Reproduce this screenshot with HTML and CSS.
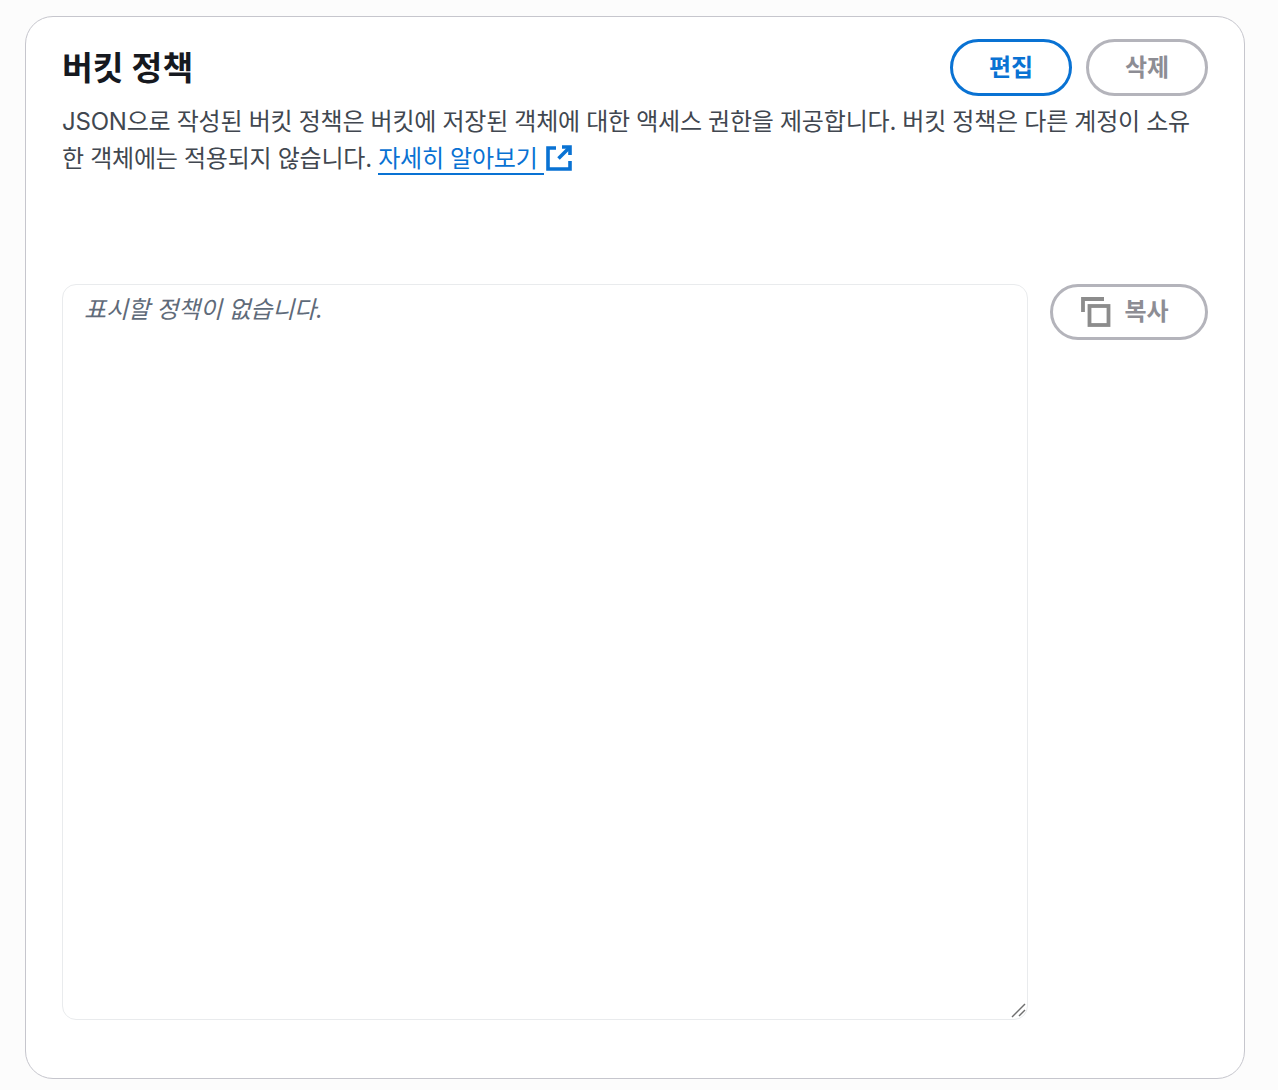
FILE: index.html
```html
<!DOCTYPE html>
<html lang="ko">
<head>
    <meta charset="UTF-8">
    <title>버킷 정책</title>
    <link rel="stylesheet" href="styles.css">
</head>
<body>
    <section class="card">
        <div class="card-header">
            <h2>버킷 정책</h2>
            <div class="actions">
                <button class="btn btn-primary"><span class="btn-label">편집</span></button>
                <button class="btn btn-disabled"><span class="btn-label">삭제</span></button>
            </div>
        </div>
        <p class="desc">JSON으로 작성된 버킷 정책은 버킷에 저장된 객체에 대한 액세스 권한을 제공합니다. 버킷 정책은 다른 계정이 소유한 객체에는 적용되지 않습니다. <a href="#" class="ext-link"><span class="ext-text">자세히 알아보기 </span><svg class="ext-icon" viewBox="0 0 26 26" width="26" height="26" fill="none" stroke="#0972d3" stroke-width="3.6"><path d="M10 3H2v21h22V16"/><path d="M16 2h8v8"/><path d="M23.5 2.5 12.5 13.5"/></svg></a></p>
        <div class="policy-row">
            <div class="policy-box">
                <textarea class="policy-text" placeholder="표시할 정책이 없습니다."></textarea>
                <svg class="grip" viewBox="0 0 16 16" width="16" height="16" stroke="#6f6f6f" stroke-width="1.5"><path d="M1 14 14 1"/><path d="M8 13 14 7"/></svg>
            </div>
            <button class="btn btn-disabled btn-copy">
                <svg viewBox="0 0 30 30" width="30" height="30" fill="none" stroke="#8c8c8c" stroke-width="3.8"><path d="M2 15V2h21"/><rect x="8.5" y="9" width="19" height="19"/></svg>
                <span class="btn-label">복사</span>
            </button>
        </div>
    </section>
</body>
</html>
```

FILE: styles.css
```css
* {
    margin: 0;
    padding: 0;
    box-sizing: border-box;
}

body {
    font-family: Inter, "Noto Sans CJK KR", sans-serif;
    background-color: #fcfcfc;
    color: #414750;
    padding: 16px 33px 11px 25px;
}

.card {
    height: 1063px;
    background-color: #fff;
    border: 1px solid #c6c6cd;
    border-radius: 28px;
    padding: 22px 36px 0;
}

.card-header {
    display: flex;
    justify-content: space-between;
    align-items: flex-start;
}

.card-header h2 {
    font-size: 33.5px;
    line-height: 58px;
    font-weight: 700;
    color: #16191f;
}

.actions {
    display: flex;
    gap: 14px;
}

.btn {
    font-family: inherit;
    font-size: 24px;
    font-weight: 700;
    height: 57px;
    width: 122px;
    border-radius: 29px;
    border: 3px solid;
    background-color: #fff;
}

.btn-label {
    display: block;
    margin-top: -5px;
}

.btn-primary {
    color: #0972d3;
    border-color: #0972d3;
}

.btn-disabled {
    color: #8d8d94;
    border-color: #b4b4bb;
}

.desc {
    font-size: 24px;
    line-height: 37px;
    letter-spacing: -0.2px;
    word-spacing: -0.3px;
    margin-top: 6px;
}

.ext-link {
    color: #0972d3;
    text-decoration: none;
}

.ext-text {
    border-bottom: 2px solid #0972d3;
    padding-bottom: 0;
}

.ext-icon {
    display: inline-block;
    height: 26px;
    vertical-align: top;
    margin-top: 5px;
    margin-left: 2px;
}

.policy-row {
    display: flex;
    align-items: flex-start;
    gap: 22px;
    margin-top: 107px;
}

.policy-box {
    position: relative;
    flex: none;
    width: 966px;
    height: 736px;
}

.policy-text {
    display: block;
    width: 100%;
    height: 100%;
    border: 1px solid #e9ebed;
    border-radius: 14px;
    padding: 7px 21px;
    font-family: inherit;
    font-size: 24px;
    line-height: 36px;
    letter-spacing: -0.2px;
    outline: none;
    resize: none;
}

.policy-text::placeholder {
    color: #5f6b7a;
    font-style: italic;
    opacity: 1;
}

.grip {
    position: absolute;
    right: 1px;
    bottom: 1px;
}

.btn-copy {
    flex: none;
    width: 158px;
    height: 56px;
    padding-right: 8px;
    display: flex;
    align-items: center;
    justify-content: center;
    gap: 13px;
}
```
